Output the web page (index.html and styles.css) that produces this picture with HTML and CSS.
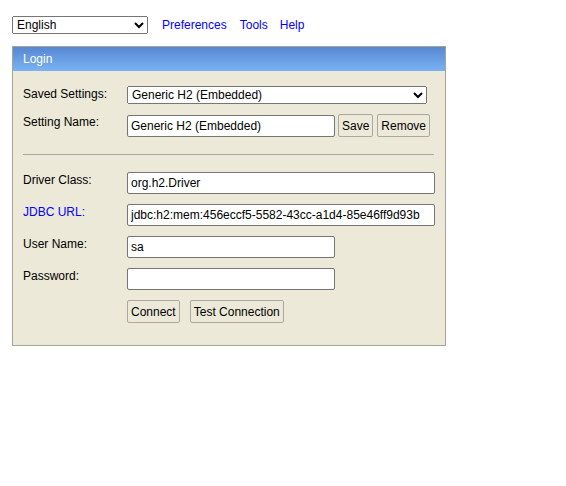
FILE: index.html
```html
<!DOCTYPE html>
<html>
<head>
<meta charset="utf-8">
<title>H2 Console</title>
<link rel="stylesheet" href="styles.css">
</head>
<body>
<div class="top">
  <select class="lang"><option>English</option></select>
  <a class="nav nav-pref" href="#">Preferences</a>
  <a class="nav nav-tools" href="#">Tools</a>
  <a class="nav nav-help" href="#">Help</a>
</div>
<div class="panel">
  <div class="head">Login</div>
  <div class="body">
    <div class="row row-saved">
      <span class="lbl">Saved Settings:</span>
      <select class="sel-wide"><option>Generic H2 (Embedded)</option></select>
    </div>
    <div class="row row-name">
      <span class="lbl">Setting Name:</span>
      <input class="in in-mid in-name" type="text" value="Generic H2 (Embedded)">
      <button class="btn btn-save">Save</button>
      <button class="btn">Remove</button>
    </div>
    <div class="sep"></div>
    <div class="row">
      <span class="lbl">Driver Class:</span>
      <input class="in in-wide" type="text" value="org.h2.Driver">
    </div>
    <div class="row">
      <span class="lbl lbl-link">JDBC URL:</span>
      <input class="in in-wide" type="text" value="jdbc:h2:mem:456eccf5-5582-43cc-a1d4-85e46ff9d93b">
    </div>
    <div class="row">
      <span class="lbl">User Name:</span>
      <input class="in in-mid" type="text" value="sa">
    </div>
    <div class="row">
      <span class="lbl">Password:</span>
      <input class="in in-mid" type="password" value="">
    </div>
    <div class="row row-btns">
      <span class="lbl"></span>
      <button class="btn btn-connect">Connect</button>
      <button class="btn">Test Connection</button>
    </div>
  </div>
</div>
</body>
</html>
```
FILE: styles.css
```css
html, body {
  margin: 0;
  padding: 0;
  background: #ffffff;
}
body {
  font-family: "Liberation Sans", Arial, sans-serif;
  font-size: 12px;
  color: #000;
}
.top {
  display: flex;
  align-items: center;
  padding: 16px 12px 0 12px;
  height: 18px;
}
select, input, button {
  font-family: "Liberation Sans", Arial, sans-serif;
  font-size: 12px;
  color: #000;
  margin: 0;
}
.lang {
  width: 136px;
  height: 18px;
}
.nav {
  color: #0000ff;
  text-decoration: none;
  font-size: 12px;
}
.nav-pref { margin-left: 14px; }
.nav-tools { margin-left: 13px; }
.nav-help { margin-left: 12px; }

.panel {
  margin: 12px 0 0 12px;
  width: 434px;
  box-sizing: border-box;
  border: 1px solid #a6a496;
  background: #ece9d8;
}
.head {
  height: 24px;
  line-height: 24px;
  padding-left: 10px;
  color: #ffffff;
  background: linear-gradient(#5687d3, #7ab3f3);
}
.body {
  padding: 15px 10px 22px 10px;
}
.row {
  display: flex;
  align-items: flex-start;
  margin-top: 10px;
}
.row-saved { margin-top: 0; }
.lbl {
  width: 104px;
  flex: none;
  line-height: 14px;
  padding-top: 1px;
}
.lbl-link { color: #0000ff; }
.sel-wide {
  width: 300px;
  height: 18px;
}
.in {
  box-sizing: border-box;
  height: 22px;
  padding: 0 3px;
  border: 1px solid #767676;
  border-radius: 2px;
  background: #fff;
}
.in-mid { width: 208px; }
.in-wide { width: 308px; }
.in-name { margin-top: 1px; margin-right: 3px; }
.btn {
  box-sizing: border-box;
  height: 23px;
  padding: 0 3px;
  border: 1px solid #aaa8a0;
  border-radius: 2px;
  background: #ece9d8;
}
.btn-save { margin-right: 4px; }
.btn-connect { margin-right: 10px; }
.sep {
  margin: 17px 0 0 0;
  height: 1px;
  width: 411px;
  background: #a8a8a4;
}
.sep + .row { margin-top: 17px; }
```
